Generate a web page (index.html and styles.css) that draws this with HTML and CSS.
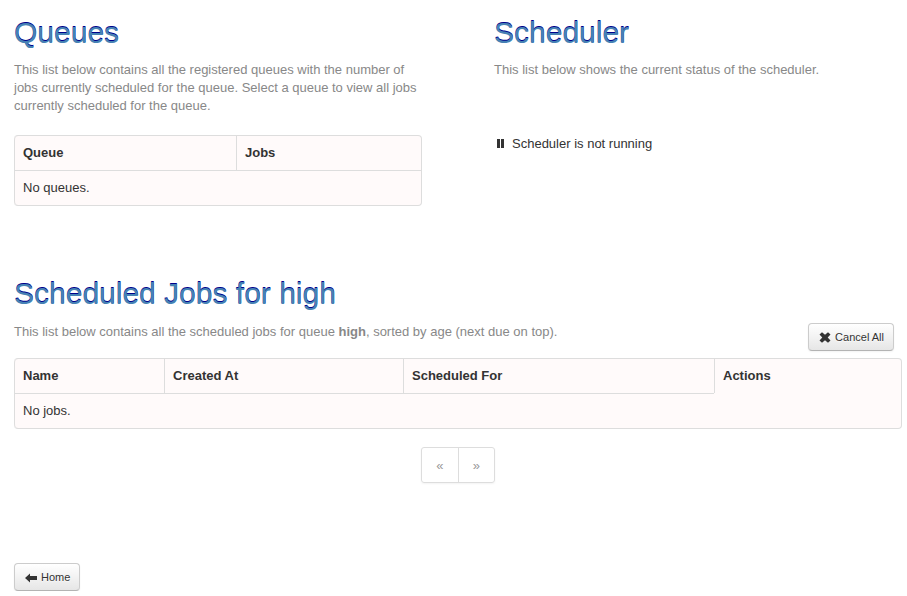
FILE: index.html
```html
<!DOCTYPE html>
<html lang="en">
<head>
<meta charset="utf-8">
<title>Scheduled Jobs</title>
<link rel="stylesheet" href="styles.css">
</head>
<body>
<main class="page">
  <div class="top">
    <section class="queues">
      <h1>Queues</h1>
      <p class="intro">This list below contains all the registered queues with the number of jobs currently scheduled for the queue. Select a queue to view all jobs currently scheduled for the queue.</p>
      <table class="table">
        <thead><tr><th class="col-queue">Queue</th><th>Jobs</th></tr></thead>
        <tbody><tr><td colspan="2">No queues.</td></tr></tbody>
      </table>
    </section>
    <section class="scheduler">
      <h1>Scheduler</h1>
      <p class="intro">This list below shows the current status of the scheduler.</p>
      <p class="status"><svg class="pause" viewBox="0 0 14 14"><path d="M3 2h3v9H3zM7 2h3v9H7z"/></svg>Scheduler is not running</p>
    </section>
  </div>
  <section class="jobs">
    <h1>Scheduled Jobs for high</h1>
    <div class="toolbar">
      <p class="intro">This list below contains all the scheduled jobs for queue <strong>high</strong>, sorted by age (next due on top).</p>
      <button class="btn"><svg class="icon" viewBox="0 0 14 14"><path d="M1.500 4.500 4 2.200 7 4.800 10 2.200 12.500 4.500 9.700 7.500 12.500 10.500 10 12.800 7 10.200 4 12.800 1.500 10.500 4.300 7.500z"/></svg>Cancel All</button>
    </div>
    <table class="table">
      <thead><tr><th class="col-name">Name</th><th class="col-created">Created At</th><th class="col-scheduled">Scheduled For</th><th>Actions</th></tr></thead>
      <tbody><tr><td colspan="3">No jobs.</td><td class="blank"></td></tr></tbody>
    </table>
    <nav class="pager"><a>«</a><a>»</a></nav>
  </section>
  <button class="btn"><svg class="icon" viewBox="0 0 14 14"><path d="M1 8 6 3.500V6h7v4H6v2.500z"/></svg>Home</button>
</main>
</body>
</html>
```
FILE: styles.css
```css
body {
  margin: 0;
  background: #fff;
  color: #333;
  font: 13px/18px "Liberation Sans", Arial, sans-serif;
  overflow: hidden;
}
.page { padding: 15px 5px 0 14px; }
.top { display: flex; gap: 72px; height: 261px; }
.queues { width: 408px; }
h1 {
  margin: 0;
  color: steelblue;
  font-size: 30px;
  font-weight: normal;
  line-height: 36px;
  text-shadow: 0 -1px 0 darkblue;
}
.intro { margin: 10px 0 0; color: #888; }
.queues .table { margin-top: 20px; }
.status { display: flex; align-items: center; margin: 56px 0 0; }
.pause { width: 14px; height: 14px; margin-right: 4px; fill: #333; }
.table {
  width: 100%;
  table-layout: fixed;
  border: 1px solid #ddd;
  border-left: 0;
  border-collapse: separate;
  border-spacing: 0;
  border-radius: 4px;
  background: snow;
}
.table th, .table td {
  padding: 8px;
  border-left: 1px solid #ddd;
  text-align: left;
  vertical-align: top;
}
.table td { border-top: 1px solid #ddd; }
.table thead th:first-child { border-top-left-radius: 4px; }
.table tbody tr:last-child > :first-child { border-bottom-left-radius: 4px; }
.table td.blank { border: 0; }
.col-queue { width: 205px; }
.col-name { width: 133px; }
.col-created { width: 222px; }
.col-scheduled { width: 294px; }
.toolbar { display: flex; justify-content: space-between; height: 46px; }
.toolbar .intro { margin-top: 11px; }
.toolbar .btn { margin: 11px 8px 0 0; }
.btn {
  display: inline-flex;
  align-items: center;
  box-sizing: border-box;
  height: 28px;
  padding: 0 9px;
  border: 1px solid #ccc;
  border-bottom-color: #b3b3b3;
  border-radius: 4px;
  background: linear-gradient(#fff, #e6e6e6);
  box-shadow: inset 0 1px 0 rgba(255,255,255,.2), 0 1px 2px rgba(0,0,0,.05);
  color: #333;
  font: 11px/16px "Liberation Sans", Arial, sans-serif;
  text-shadow: 0 1px 1px rgba(255,255,255,.75);
}
.icon { width: 14px; height: 14px; margin-right: 3px; fill: #333; }
.pager {
  display: flex;
  box-sizing: border-box;
  width: 74px;
  height: 36px;
  margin: 18px 0 80px 407px;
  border: 1px solid #ddd;
  border-radius: 3px;
  box-shadow: 0 1px 2px rgba(0,0,0,.05);
}
.pager a { flex: 1; color: #999; line-height: 36px; height: 34px; text-align: center; }
.pager a + a { border-left: 1px solid #ddd; }
```
